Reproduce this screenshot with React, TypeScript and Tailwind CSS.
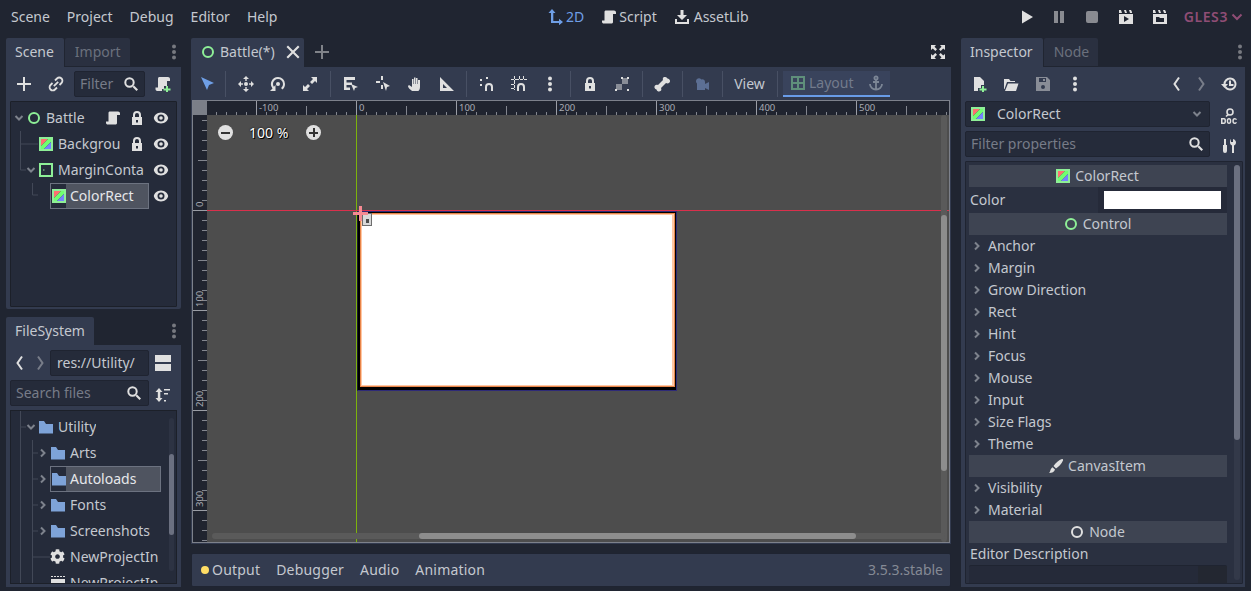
import type { ReactNode } from 'react';
import { FaCog } from 'react-icons/fa';

const Svg = ({ children, size = 16, className = '' }: { children: ReactNode; size?: number; className?: string }) => (
  <svg width={size} height={size} viewBox="0 0 16 16" className={`shrink-0 ${className}`} fill="#e0e0e0" fillRule="evenodd">
    {children}
  </svg>
);

const Plus = () => <Svg><path d="M7 1h2v6h6v2H9v6H7V9H1V7h6z" /></Svg>;
const Link = () => (
  <Svg>
    <g fill="none" stroke="#e0e0e0" strokeWidth="1.8">
      <path d="M7 4.500l2-2a2.800 2.800 0 0 1 4.500 4.500l-2 2" />
      <path d="M9 11.500l-2 2A2.800 2.800 0 0 1 2.500 9l2-2" />
      <path d="M5.800 10.200l4.400-4.400" />
    </g>
  </Svg>
);
const Search = () => (
  <Svg>
    <circle cx="6.500" cy="6.500" r="4.200" fill="none" stroke="#e0e0e0" strokeWidth="2" />
    <path d="M9.500 11l1.500-1.500 4 4-1.500 1.500z" />
  </Svg>
);
const ScriptAdd = () => (
  <Svg>
    <path d="M4 1h9c1 0 2 .8 2 2v2h-3v5H9v3h-2v2H3c-1.500 0-2.500-.6-2.500-2v-1.500H3V3c0-1 .4-2 1-2z" />
    <path fill="#8eef97" d="M11 10h2v2.500h2.500v2H13V16h-2v-1.500H8.500v-2H11z" />
  </Svg>
);
const Scroll = () => (
  <Svg>
    <path d="M5 1.500h8c1.200 0 2 .8 2 2V5h-3v8c0 1-.8 1.500-2 1.500H3c-1.300 0-2-.6-2-1.500v-1.500h2.500V3c0-1 .5-1.500 1.500-1.500z" />
  </Svg>
);
const Lock = () => (
  <Svg>
    <path d="M8 1a4 4 0 0 0-4 4v2H3v8h10V7h-1V5a4 4 0 0 0-4-4zm0 2a2 2 0 0 1 2 2v2H6V5a2 2 0 0 1 2-2zM7 10h2v2.500H7z" />
  </Svg>
);
const Eye = () => (
  <Svg>
    <path d="M8 2.500C4 2.500 1.300 5.300.8 8c.5 2.700 3.200 5.500 7.200 5.500s6.700-2.800 7.200-5.500c-.5-2.700-3.200-5.500-7.200-5.500zm0 2a3.500 3.500 0 1 1 0 7 3.500 3.500 0 0 1 0-7z" />
    <circle cx="8" cy="8" r="1.800" />
  </Svg>
);
const Ring = ({ color = '#8eef97' }: { color?: string }) => (
  <Svg><circle cx="8" cy="8" r="5" fill="none" stroke={color} strokeWidth="2" /></Svg>
);
const ColorRectIcon = () => (
  <Svg>
    <path fill="#8eef97" d="M1 1h14v14H1zM3 3v10h10V3z" />
    <path fill="#ff7070" d="M3 3h7l-7 7z" />
    <path fill="#70ff70" d="M10 3h3v3l-7 7H3v-3z" />
    <path fill="#7582ff" d="M13 6v7H6z" />
  </Svg>
);
const MarginIcon = () => (
  <Svg>
    <path fill="#8eef97" d="M1 1h14v14H1zM3 3v10h10V3z" />
    <path fill="#8eef97" d="M5 7.500h1.500v1H5z" />
  </Svg>
);
const Chevron = ({ down, className = '' }: { down?: boolean; className?: string }) => (
  <svg width="10" height="10" viewBox="0 0 10 10" className={`shrink-0 ${className}`} fill="none" stroke="#7d828c" strokeWidth="2">
    <path d={down ? 'M1.500 3l3.500 3.500L8.500 3' : 'M3 1.500L6.500 5 3 8.500'} />
  </svg>
);
const Dots = ({ opacity = 1 }: { opacity?: number }) => (
  <Svg>
    <g opacity={opacity}>
      <circle cx="8" cy="2.500" r="2" />
      <circle cx="8" cy="8" r="2" />
      <circle cx="8" cy="13.500" r="2" />
    </g>
  </Svg>
);
const Folder = () => (
  <Svg><path fill="#7ea3d8" d="M1 2h5l2 3h7v9.500H1z" /></Svg>
);
const Back = ({ opacity = 1 }: { opacity?: number }) => (
  <Svg><path d="M10 1.500L5.500 8l4.500 6.500" fill="none" stroke="#e0e0e0" strokeWidth="2" opacity={opacity} /></Svg>
);
const Forward = () => (
  <Svg><path d="M6 1.500L10.500 8 6 14.500" fill="none" stroke="#e0e0e0" strokeWidth="2" opacity="0.4" /></Svg>
);
const Split = () => (
  <Svg><path d="M0 0h16v7H0zM0 9h16v7H0z" /></Svg>
);
const Sort = () => (
  <Svg>
    <path d="M4 1l3.500 4H5.300v6h2.200L4 15 .5 11h2.300V5H.5z" />
    <path d="M9 2h6v1.600H9zM9 6h4v1.600H9zM9 13h2v1.600H9z" />
  </Svg>
);
const Close = () => (
  <Svg><path d="M3 1.500L8 6.500l5-5L14.500 3l-5 5 5 5-1.500 1.500-5-5-5 5L1.500 13l5-5-5-5z" /></Svg>
);
const Expand = () => (
  <Svg>
    <path d="M1 1h5L4.500 2.800 7 5.300 5.300 7 2.800 4.500 1 6zM15 1v5l-1.800-1.500L10.700 7 9 5.300l2.500-2.500L10 1zM1 15v-5l1.800 1.500L5.300 9 7 10.700l-2.500 2.500L6 15zM15 15h-5l1.500-1.800L9 10.700 10.700 9l2.500 2.500L15 10z" />
  </Svg>
);
const Axis2D = () => (
  <Svg>
    <path fill="#6f9fe6" d="M4 0l3.500 4H5.300v8H11V9.800l4 3.200-4 3.200V14H3V4H.5z" />
  </Svg>
);
const Download = () => (
  <Svg>
    <path d="M6.500 1h3v5H13L8 11 3 6h3.500z" />
    <path d="M1 10h2v3h10v-3h2v5H1z" />
  </Svg>
);
const Clapper = ({ play }: { play?: boolean }) => (
  <Svg>
    <path d="M1 5h14v10H1z" />
    <path d="M1 1h2l1 3H1zM6 1h2l1 3H7zM11 1h2l1 2v1h-2z" />
    {play ? <path fill="#202531" d="M6 7l5 3-5 3z" /> : <path fill="#202531" d="M4 8h3l1 1h4v4H4z" />}
  </Svg>
);
const SelectTool = () => <Svg><path fill="#6f9fe6" d="M2 1l13 6-5 2-2 5z" /></Svg>;
const MoveTool = () => (
  <Svg>
    <path d="M8 0l3 3H5zM8 16l-3-3h6zM0 8l3-3v6zM16 8l-3 3V5z" />
    <circle cx="8" cy="8" r="2" />
    <path d="M7 3h2v2H7zM7 11h2v2H7zM3 7h2v2H3zM11 7h2v2h-2z" opacity="0.7" />
  </Svg>
);
const RotateTool = () => (
  <Svg>
    <path d="M8 1a7 7 0 0 1 7 7c0 2.500-1 4.300-2.500 5.500L11 12c1.200-1 2-2.300 2-4a5 5 0 0 0-10 0c0 1 .3 2 .9 2.800L5.500 9v6H0l2.500-2.600A7 7 0 0 1 8 1z" />
    <circle cx="8" cy="8" r="2" />
  </Svg>
);
const ScaleTool = () => (
  <Svg>
    <path d="M9 1h6v6l-2-2-3 3-2-2 3-3zM1 9l2 2 3-3 2 2-3 3 2 2H1z" />
  </Svg>
);
const ListSelect = () => (
  <Svg>
    <path d="M1 1h11v3H3.500v2.500H9V9H3.500v2.500H7V14H1z" />
    <path d="M8 8l7 3-3 1-1 3z" />
  </Svg>
);
const PivotTool = () => (
  <Svg>
    <path d="M1 5h4v2H1zM6 0h2v4H6zM6 9h2v4H6z" />
    <path d="M8 6l7 4-3 1-1 4z" />
  </Svg>
);
const Hand = () => (
  <Svg>
    <path d="M5 15c-1-1-4-3-4-5l1-1 3 2V3h1.500v5H7V1.500h1.500V8H9V2h1.500v6h.5V4h2v7c0 2-1 4-2 4z" />
  </Svg>
);
const RulerTool = () => (
  <Svg>
    <path d="M1 1l14 14H1zM4 8v4h4z" />
  </Svg>
);
const Snap = () => (
  <Svg>
    <path d="M1 3h2v2H1zM1 8h2v2H1zM7 1h2v2H7z" />
    <path d="M6 15v-4a4 4 0 0 1 8 0v4h-2v-4a2 2 0 0 0-4 0v4z" />
  </Svg>
);
const GridSnap = () => (
  <Svg>
    <path d="M3 0h1v14H3zM8 0h1v4H8zM12 0h1v4h-1zM0 3h16v1H0zM0 8h4v1H0zM0 12h4v1H0z" />
    <path d="M6 15v-4a4 4 0 0 1 8 0v4h-2v-4a2 2 0 0 0-4 0v4z" />
  </Svg>
);
const Group = () => (
  <Svg>
    <path opacity="0.5" d="M2 8h6V2h6v6H8v6H2z" />
    <path d="M1 13h2v2H1zM13 13h2v2h-2zM13 1h2v2h-2zM7 1h2v2H7z" />
  </Svg>
);
const Bone = () => (
  <Svg>
    <path d="M11 1a2.500 2.500 0 0 1 2.500 1.500A2.500 2.500 0 0 1 15 7c-1 .6-2 .4-3 0L7 12c.4 1 .6 2-.2 2.800a2.500 2.500 0 0 1-4.300-1.300A2.500 2.500 0 0 1 1 9.500c1-1 2-.8 3-.5l5-5c-.4-1-.2-2 .3-2.500.5-.4 1-.5 1.700-.5z" />
  </Svg>
);
const Camera = () => (
  <Svg>
    <path fill="#5c6f94" d="M3 3a3 3 0 0 1 4.500.5A2.500 2.500 0 0 1 11 6v2l4-2v8l-4-2v2H3V7.500A3 3 0 0 1 3 3z" />
  </Svg>
);
const LayoutIcon = () => (
  <Svg>
    <path fill="#5f8f7b" d="M1 1h14v14H1zM3 3v4h4V3zM9 3v4h4V3zM3 9v4h4V9zM9 9v4h4V9z" />
  </Svg>
);
const Anchor = () => (
  <Svg>
    <g fill="none" stroke="#7c8696" strokeWidth="1.800">
      <circle cx="8" cy="3" r="1.600" />
      <path d="M8 5v10M5 7h6M2 9c0 3 2.500 5.500 6 5.500s6-2.500 6-5.500" />
    </g>
  </Svg>
);
const Play = () => <Svg><path d="M3 1.500l11 6.500-11 6.500z" /></Svg>;
const Pause = () => <Svg><path opacity="0.55" d="M3 2h4v12H3zM9 2h4v12H9z" /></Svg>;
const Stop = () => <Svg><rect x="2" y="2" width="12" height="12" rx="2" opacity="0.55" /></Svg>;
const NewFile = () => (
  <Svg>
    <path d="M3 1h6l4 4v4h-3v3H7v3H3z" />
    <path fill="#8eef97" d="M11 10h2v2.500h2.500v2H13V16h-2v-1.500H8.500v-2H11z" />
  </Svg>
);
const OpenFolder = () => (
  <Svg>
    <path d="M1 3h5l1.500 2H12v1H4L1.500 13H1z" />
    <path d="M5 7.500h10.500L13 15H2z" />
  </Svg>
);
const Save = () => (
  <Svg>
    <path opacity="0.5" d="M1 1h11l3 3v11H1zM4 2v4h7V2zM8 9a2 2 0 1 0 0 4 2 2 0 0 0 0-4zM8 3h2v2H8z" />
  </Svg>
);
const History = () => (
  <Svg>
    <path d="M9 1.500a6.500 6.500 0 1 1-5.500 10l1.700-1A4.500 4.500 0 1 0 4.500 8H7l-3.500 4L0 8h2.500A6.500 6.500 0 0 1 9 1.500z" />
    <path d="M8 4.500h2V8h2.500v2H8z" />
  </Svg>
);
const DocIcon = () => (
  <Svg>
    <circle cx="9" cy="4" r="3" fill="none" stroke="#e0e0e0" strokeWidth="1.600" />
    <path d="M6.500 6l1.200 1.200L5.500 9 4.500 8z" />
    <path d="M0 10h3c1.500 0 2 1 2 3s-.5 3-2 3H0zM1.500 11.500v3H3c.4 0 .5-.5.5-1.500s-.1-1.500-.5-1.500zM8 10c1.500 0 2.300 1 2.300 3S9.500 16 8 16s-2.300-1-2.300-3S6.500 10 8 10zm0 1.500c-.5 0-.8.500-.8 1.500s.3 1.500.8 1.500.8-.5.8-1.500-.3-1.500-.8-1.500zM16 11.800h-1.500c-.2-.3-.4-.4-.8-.4-.6 0-.9.600-.9 1.600s.3 1.600.9 1.600c.4 0 .6-.1.800-.4H16c-.3 1-1.200 1.800-2.300 1.800-1.500 0-2.400-1-2.400-3s.9-3 2.400-3c1.100 0 2 .8 2.300 1.800z" />
  </Svg>
);
const Tools = () => (
  <Svg>
    <path d="M3 1h2v6h1v6a2 2 0 0 1-4 0V7h1zM10 1v3h2V1c2 .6 3 2 3 3.500S14 7 13 7.500V15h-2V7.500C10 7 9 6 9 4.500S9.500 1.600 10 1z" />
  </Svg>
);
const Brush = () => (
  <Svg>
    <path d="M14 1c.8 0 1.300.7 1 1.500C13.500 6 10.500 9 8 10.500L5.500 8C7.500 5 11 2 14 1zM4.500 9.200L7 11.500c-.5 2.500-3 3.500-6 3.500 1.500-1 1-4 3.500-5.800z" />
  </Svg>
);

const IconButton = ({ children, className = 'w-[32px]' }: { children: ReactNode; className?: string }) => (
  <div className={`flex h-full shrink-0 items-center justify-center ${className}`}>{children}</div>
);

const Sep = ({ className = 'w-[8px]' }: { className?: string }) => (
  <div className={`flex h-full shrink-0 items-center justify-center ${className}`}>
    <div className="h-[26px] w-px bg-[#485064]" />
  </div>
);

const Tab = ({ label, active }: { label: string; active?: boolean }) =>
  active ? (
    <div className="flex h-[29px] items-center rounded-t-[2px] bg-[#333b4f] pb-[2px] pl-[9px] pr-[10px] text-[#c4c8cf]">{label}</div>
  ) : (
    <div className="mb-[1px] flex h-[28px] items-center rounded-t-[2px] bg-[#2a3040] pl-[10px] pr-[9px] text-[#6a707d]">{label}</div>
  );

const Input = ({ children, className = '' }: { children: ReactNode; className?: string }) => (
  <div className={`flex h-[26px] shrink-0 items-center overflow-hidden rounded-[2px] border border-[#1f2431] bg-[#252b3a] ${className}`}>
    {children}
  </div>
);

const TreeRow = ({
  indent,
  arrow,
  icon,
  label,
  selected,
  width,
  right,
}: {
  indent: number;
  arrow?: 'down' | 'right';
  icon: ReactNode;
  label: string;
  selected?: boolean;
  width?: number;
  right?: ReactNode;
}) => (
  <div className="flex h-[26px] shrink-0 items-center" style={{ paddingLeft: indent }}>
    <div className="flex w-[14px] shrink-0 items-center justify-center">
      {arrow && <Chevron down={arrow === 'down'} />}
    </div>
    <div
      className={`relative flex h-[26px] shrink-0 items-center overflow-hidden whitespace-nowrap ${
        selected ? 'border border-[#6c7280] bg-[#4f5460] pl-[15px] text-[#e6e7ea]' : 'pl-[16px]'
      }`}
      style={width ? { width } : undefined}
    >
      {selected && <div className="absolute inset-y-0 left-0 w-[15px] bg-[#252b3a]" />}
      <div className={`absolute left-0 ${selected ? 'top-[4px]' : 'top-[5px]'}`}>{icon}</div>
      <span className="pl-[4px]">{label}</span>
    </div>
    {right && <div className="ml-auto flex items-center">{right}</div>}
  </div>
);

const SectionHeader = ({ icon, label }: { icon: ReactNode; label: string }) => (
  <div className="flex h-[22px] shrink-0 items-center justify-center gap-[4px] bg-[#3e4452] pr-[2px] text-[#c4c8cf]">
    {icon}
    {label}
  </div>
);

const PropGroup = ({ label }: { label: string }) => (
  <div className="flex h-[22px] shrink-0 items-center pl-[3px]">
    <Chevron />
    <span className="pl-[6px]">{label}</span>
  </div>
);

const HRuler = () => (
  <svg width="743" height="14" className="block">
    {Array.from({ length: 76 }, (_, i) => i).map(i => {
      const value = -150 + i * 10;
      const x = value + 149;
      const major = value % 100 === 0;
      const mid = value % 50 === 0;
      return <rect key={i} x={x} y={major ? 0 : mid ? 5 : 11} width="1" height={major ? 14 : mid ? 9 : 3} fill={major ? '#9a9da5' : '#82858e'} />;
    })}
    {[-100, 0, 100, 200, 300, 400, 500].map(v => (
      <text key={v} x={v + 152} y="10" fontSize="9.500" fill="#a8abb3">
        {v}
      </text>
    ))}
  </svg>
);

const VRuler = () => (
  <svg width="14" height="427" className="block">
    {Array.from({ length: 43 }, (_, i) => i).map(i => {
      const value = -90 + i * 10;
      const y = value + 95;
      const major = value % 100 === 0;
      const mid = value % 50 === 0;
      return <rect key={i} x={major ? 0 : mid ? 5 : 9} y={y} width={major ? 14 : mid ? 9 : 5} height="1" fill={major ? '#9a9da5' : '#82858e'} />;
    })}
    {[0, 100, 200, 300].map(v => (
      <text key={v} transform={`translate(10 ${v + 92}) rotate(-90)`} fontSize="9.500" fill="#a8abb3">
        {v}
      </text>
    ))}
  </svg>
);

export default function App() {
  return (
    <div className="flex h-[591px] w-[1251px] flex-col overflow-hidden bg-[#202531] font-['Noto_Sans',sans-serif] text-[14px] leading-none text-[#c4c8cf]">
      {/* top menu */}
      <header className="flex h-[34px] shrink-0 items-center">
        <nav className="flex w-[548px] shrink-0 gap-[17px] pl-[11px]">
          <span>Scene</span>
          <span>Project</span>
          <span>Debug</span>
          <span>Editor</span>
          <span>Help</span>
        </nav>
        <div className="flex items-center">
          <Axis2D />
          <span className="ml-[2px] text-[#6f9fe6]">2D</span>
          <span className="ml-[17px]"><Scroll /></span>
          <span className="ml-[2px]">Script</span>
          <span className="ml-[17px]"><Download /></span>
          <span className="ml-[4px]">AssetLib</span>
        </div>
        <div className="ml-auto flex h-full items-center pr-[8px]">
          <IconButton><Play /></IconButton>
          <IconButton className="w-[33px]"><Pause /></IconButton>
          <IconButton><Stop /></IconButton>
          <IconButton className="w-[36px]"><Clapper play /></IconButton>
          <IconButton className="w-[32px]"><Clapper /></IconButton>
          <span className="ml-[8px] font-semibold tracking-[0.6px] text-[#8f4d75]">GLES3</span>
          <svg width="12" height="12" viewBox="0 0 12 12" className="ml-[3px]" fill="none" stroke="#8f4d75" strokeWidth="2">
            <path d="M1.500 3.500L6 8l4.500-4.500" />
          </svg>
        </div>
      </header>

      <div className="flex min-h-0 flex-1 pb-[4px] pt-[4px]">
        {/* left dock */}
        <aside className="ml-[6px] flex w-[175px] shrink-0 flex-col">
          <section className="flex h-[271px] shrink-0 flex-col">
            <div className="flex h-[29px] shrink-0 items-end gap-[1px]">
              <Tab label="Scene" active />
              <Tab label="Import" />
              <div className="mb-[7px] ml-auto mr-[-1px]"><Dots opacity={0.45} /></div>
            </div>
            <div className="flex min-h-0 flex-1 flex-col rounded-b-[2px] bg-[#333b4f] px-[4px] pb-[2px]">
              <div className="flex h-[34px] shrink-0 items-center">
                <IconButton className="w-[28px]"><Plus /></IconButton>
                <IconButton className="w-[36px]"><Link /></IconButton>
                <Input className="w-[71px] pl-[5px] text-[#777c88]">
                  <span>Filter</span>
                  <span className="ml-auto pr-[5px]"><Search /></span>
                </Input>
                <IconButton className="ml-[2px] w-[32px]"><ScriptAdd /></IconButton>
              </div>
              <div className="relative flex min-h-0 flex-1 flex-col overflow-hidden rounded-[1px] border border-[#1c2029] bg-[#252b3a] pt-[3px]">
                <svg width="60" height="100" className="absolute left-0 top-0">
                  <path d="M9.500 29v39H15M9.500 42H27M21.500 81v12H27" fill="none" stroke="#424857" />
                </svg>
                <TreeRow indent={1} arrow="down" icon={<Ring />} label="Battle"
                  right={<div className="flex items-center pr-[7px]"><Scroll /><span className="ml-[8px]"><Lock /></span><span className="ml-[8px]"><Eye /></span></div>} />
                <TreeRow indent={13} icon={<ColorRectIcon />} label="Backgrou"
                  right={<div className="flex items-center pr-[7px]"><Lock /><span className="ml-[8px]"><Eye /></span></div>} />
                <TreeRow indent={13} arrow="down" icon={<MarginIcon />} label="MarginConta"
                  right={<div className="flex items-center pr-[7px]"><Eye /></div>} />
                <TreeRow indent={25} icon={<ColorRectIcon />} label="ColorRect" selected width={99}
                  right={<div className="flex items-center pr-[7px]"><Eye /></div>} />
              </div>
            </div>
          </section>

          <section className="mt-[8px] flex min-h-0 flex-1 flex-col">
            <div className="flex h-[28px] shrink-0 items-end">
              <div className="flex h-[28px] items-center rounded-t-[2px] bg-[#333b4f] px-[9px]">FileSystem</div>
              <div className="mb-[6px] ml-auto mr-[-1px]"><Dots opacity={0.45} /></div>
            </div>
            <div className="flex min-h-0 flex-1 flex-col bg-[#333b4f] px-[4px] pb-[3px]">
              <div className="flex h-[35px] shrink-0 items-center">
                <IconButton className="w-[20px]"><Back /></IconButton>
                <IconButton className="w-[20px]"><Forward /></IconButton>
                <Input className="w-[99px] pl-[6px]">res://Utility/</Input>
                <IconButton className="w-[28px]"><Split /></IconButton>
              </div>
              <div className="flex h-[30px] shrink-0 items-start">
                <Input className="w-[139px] pl-[5px] text-[#777c88]">
                  <span>Search files</span>
                  <span className="ml-auto pr-[6px]"><Search /></span>
                </Input>
                <IconButton className="h-[26px] w-[28px]"><Sort /></IconButton>
              </div>
              <div className="relative min-h-0 flex-1 overflow-hidden border border-[#1c2029] bg-[#252b3a] pt-[3px]">
                <svg width="40" height="172" className="absolute left-0 top-0">
                  <path d="M9.500 0v172M9.500 16H15M21.500 29v143M21.500 42H27M21.500 68H27M21.500 94H27M21.500 120H27M21.500 146H39" fill="none" stroke="#424857" />
                </svg>
                <TreeRow indent={13} arrow="down" icon={<Folder />} label="Utility" />
                <TreeRow indent={25} arrow="right" icon={<Folder />} label="Arts" />
                <TreeRow indent={25} arrow="right" icon={<Folder />} label="Autoloads" selected width={111} />
                <TreeRow indent={25} arrow="right" icon={<Folder />} label="Fonts" />
                <TreeRow indent={25} arrow="right" icon={<Folder />} label="Screenshots" />
                <TreeRow indent={25} icon={<FaCog size={15} color="#e0e0e0" />} label="NewProjectIn" />
                <TreeRow indent={25} icon={<Svg><path d="M1 1h2v1H1zM4 1h2v1H4zM7 1h2v1H7zM10 1h2v1h-2zM13 1h2v1h-2zM1 4h14v8H1z" /></Svg>} label="NewProjectIn" />
                <div className="absolute right-[2px] top-[7px] h-[153px] w-[5px] rounded-[3px] bg-[#2d3343]">
                  <div className="mt-[36px] h-[81px] w-[5px] rounded-[3px] bg-[#6b7080]" />
                </div>
              </div>
            </div>
          </section>
        </aside>

        {/* center */}
        <main className="ml-[10px] flex w-[760px] shrink-0 flex-col">
          <div className="flex h-[29px] shrink-0 items-end">
            <div className="flex h-[29px] w-[113px] items-center rounded-t-[2px] bg-[#333b4f] pb-[2px] pl-[9px]">
              <Ring />
              <span className="ml-[4px]">Battle(*)</span>
              <span className="ml-auto pr-[3px]"><Close /></span>
            </div>
            <div className="mb-[7px] ml-[10px] opacity-50"><Plus /></div>
            <div className="mb-[7px] ml-auto mr-[5px]"><Expand /></div>
          </div>
          <div className="flex h-[477px] shrink-0 flex-col bg-[#333b4f] px-[1px] pb-[1px]">
            <div className="flex h-[33px] shrink-0 items-center">
              <IconButton className="w-[29px]"><SelectTool /></IconButton>
              <Sep className="w-[9px]" />
              <IconButton><MoveTool /></IconButton>
              <IconButton><RotateTool /></IconButton>
              <IconButton><ScaleTool /></IconButton>
              <Sep />
              <IconButton className="w-[33px]"><ListSelect /></IconButton>
              <IconButton><PivotTool /></IconButton>
              <IconButton><Hand /></IconButton>
              <IconButton className="w-[31px]"><RulerTool /></IconButton>
              <Sep />
              <IconButton className="w-[33px]"><Snap /></IconButton>
              <IconButton className="w-[31px]"><GridSnap /></IconButton>
              <IconButton><Dots /></IconButton>
              <Sep />
              <IconButton><Lock /></IconButton>
              <IconButton><Group /></IconButton>
              <Sep />
              <IconButton><Bone /></IconButton>
              <Sep />
              <IconButton><Camera /></IconButton>
              <Sep />
              <div className="flex w-[47px] shrink-0 justify-center">View</div>
              <Sep />
              <div className="ml-[2px] flex h-[26px] w-[107px] shrink-0 items-center border-b-[2px] border-[#699ce8] bg-[#39435c] pl-[7px] text-[#737b8c]">
                <LayoutIcon />
                <span className="ml-[3px]">Layout</span>
                <span className="ml-auto pr-[6px]"><Anchor /></span>
              </div>
            </div>
            <div className="flex min-h-0 flex-1 flex-col border border-[#7d818b]">
              <div className="flex h-[14px] shrink-0">
                <div className="h-[14px] w-[14px] shrink-0 bg-[#7b7f88]" />
                <div className="min-w-0 flex-1 overflow-hidden bg-[#20242f]"><HRuler /></div>
              </div>
              <div className="flex min-h-0 flex-1">
                <div className="h-full w-[14px] shrink-0 overflow-hidden bg-[#20242f]"><VRuler /></div>
                <div className="relative min-w-0 flex-1 overflow-hidden bg-[#4d4d4d]">
                  {/* canvas contents */}
                  <div className="absolute left-[149px] top-0 h-full w-px bg-[#7db30c]" />
                  <div className="absolute left-0 top-[95px] h-px w-full bg-[#d9304c]" />
                  <div className="absolute left-[150px] top-[96px] h-[180px] w-[320px] border border-[#2e2a78] border-l-[#1a1a2a]">
                    <div className="h-full w-full border-b-[3px] border-l-[2px] border-r border-t border-black">
                      <div className="h-full w-full border border-[#e8854a]">
                        <div className="h-full w-full border border-r-[2px] border-[#ffc8a5] bg-white" />
                      </div>
                    </div>
                  </div>
                  <div className="absolute left-[155px] top-[98px] flex h-[13px] w-[10px] items-center justify-center border border-[#6e6e6e] bg-[#d8d8d8] pt-[3px]">
                    <div className="h-[4px] w-[3px] bg-[#4d4d4d]" />
                  </div>
                  <div className="absolute left-[146px] top-[91px] h-[15px] w-[15px]">
                    <div className="absolute left-0 top-[6px] h-[3px] w-[15px] bg-[#f58a92]" />
                    <div className="absolute left-[6px] top-0 h-[15px] w-[3px] bg-[#f58a92]" />
                  </div>
                  <div className="absolute left-[11px] top-[10px] flex items-center">
                    <div className="flex h-[15px] w-[15px] items-center justify-center rounded-full bg-[#e0e0e0]">
                      <div className="h-[2px] w-[9px] bg-[#333]" />
                    </div>
                    <span className="ml-[16px] w-[49px] text-[14px] text-white [text-shadow:0_0_2px_#000,1px_1px_0_#000]">100 %</span>
                    <div className="relative ml-[8px] flex h-[15px] w-[15px] items-center justify-center rounded-full bg-[#e0e0e0]">
                      <div className="h-[2px] w-[9px] bg-[#333]" />
                      <div className="absolute h-[9px] w-[2px] bg-[#333]" />
                    </div>
                  </div>
                  <div className="absolute bottom-0 right-[2px] top-0 w-[6px] rounded-[3px] bg-[#5a5a5a]">
                    <div className="mt-[100px] h-[256px] w-[6px] rounded-[3px] bg-[#8d8d8d]" />
                  </div>
                  <div className="absolute bottom-[3px] left-[5px] right-[4px] flex h-[6px] rounded-[3px] bg-[#5a5a5a]">
                    <div className="ml-[207px] h-[6px] w-[437px] rounded-[3px] bg-[#8d8d8d]" />
                  </div>
                </div>
              </div>
            </div>
          </div>
          <div className="mt-[9px] flex h-[34px] shrink-0 items-center rounded-[2px] border border-[#1f2431] bg-[#333b4f] pl-[9px] pr-[7px]">
            <div className="h-[8px] w-[8px] rounded-full bg-[#ffdd65]" />
            <div className="flex gap-[16px] tracking-[0.2px]">
              <span className="ml-[3px]">Output</span>
              <span>Debugger</span>
              <span>Audio</span>
              <span>Animation</span>
            </div>
            <span className="ml-auto text-[#858a95]">3.5.3.stable</span>
          </div>
        </main>

        {/* inspector */}
        <aside className="ml-[10px] flex w-[284px] shrink-0 flex-col">
          <div className="flex h-[29px] shrink-0 items-end gap-[1px]">
            <Tab label="Inspector" active />
            <Tab label="Node" />
            <div className="mb-[7px] ml-auto mr-[-3px]"><Dots opacity={0.45} /></div>
          </div>
          <div className="flex min-h-0 flex-1 flex-col bg-[#333b4f] pb-[3px] pl-[4px] pr-[2px]">
            <div className="flex h-[34px] shrink-0 items-center">
              <IconButton className="w-[28px]"><NewFile /></IconButton>
              <IconButton className="ml-[2px] w-[32px]"><OpenFolder /></IconButton>
              <IconButton><Save /></IconButton>
              <IconButton><Dots /></IconButton>
              <div className="ml-auto flex items-center pr-[2px]">
                <IconButton className="h-[16px] w-[24px]"><Back /></IconButton>
                <IconButton className="h-[16px] w-[24px]"><Forward /></IconButton>
                <IconButton className="ml-[4px] h-[16px] w-[24px]"><History /></IconButton>
              </div>
            </div>
            <div className="flex h-[30px] shrink-0 items-start">
              <Input className="w-[245px] pl-[4px]">
                <ColorRectIcon />
                <span className="ml-[11px]">ColorRect</span>
                <span className="ml-auto pr-[7px]"><Chevron down /></span>
              </Input>
              <IconButton className="h-[26px] w-[31px] pl-[7px]"><DocIcon /></IconButton>
            </div>
            <div className="flex h-[30px] shrink-0 items-start">
              <Input className="w-[245px] pl-[5px] text-[#777c88]">
                <span>Filter properties</span>
                <span className="ml-auto pr-[5px]"><Search /></span>
              </Input>
              <IconButton className="h-[26px] w-[31px] pl-[7px]"><Tools /></IconButton>
            </div>
            <div className="relative flex min-h-0 flex-1 flex-col overflow-hidden rounded-[1px] border border-[#1f2431] bg-[#2a3040] pl-[3px] pr-[15px] pt-[3px]">
              <SectionHeader icon={<ColorRectIcon />} label="ColorRect" />
              <div className="flex h-[26px] shrink-0 items-center">
                <span className="w-[129px] pl-[1px]">Color</span>
                <div className="flex h-[26px] flex-1 items-center bg-[#252a39] px-[6px]">
                  <div className="h-[18px] w-full bg-white" />
                </div>
              </div>
              <SectionHeader icon={<Ring />} label="Control" />
              {['Anchor', 'Margin', 'Grow Direction', 'Rect', 'Hint', 'Focus', 'Mouse', 'Input', 'Size Flags', 'Theme'].map(name => (
                <PropGroup key={name} label={name} />
              ))}
              <SectionHeader icon={<Brush />} label="CanvasItem" />
              <PropGroup label="Visibility" />
              <PropGroup label="Material" />
              <SectionHeader icon={<Ring color="#e0e0e0" />} label="Node" />
              <div className="flex h-[22px] shrink-0 items-center pl-[1px]">Editor Description</div>
              <div className="flex h-[18px] shrink-0 justify-end rounded-t-[2px] border-t border-[#1f2431] bg-[#252a39]">
                <div className="h-full w-[29px] bg-[#232731]" />
              </div>
              <div className="absolute bottom-[3px] right-[2px] top-[3px] w-[6px] rounded-[3px] bg-[#333949]">
                <div className="h-[275px] w-[6px] rounded-[3px] bg-[#6b7080]" />
              </div>
            </div>
          </div>
        </aside>
      </div>
    </div>
  );
}
